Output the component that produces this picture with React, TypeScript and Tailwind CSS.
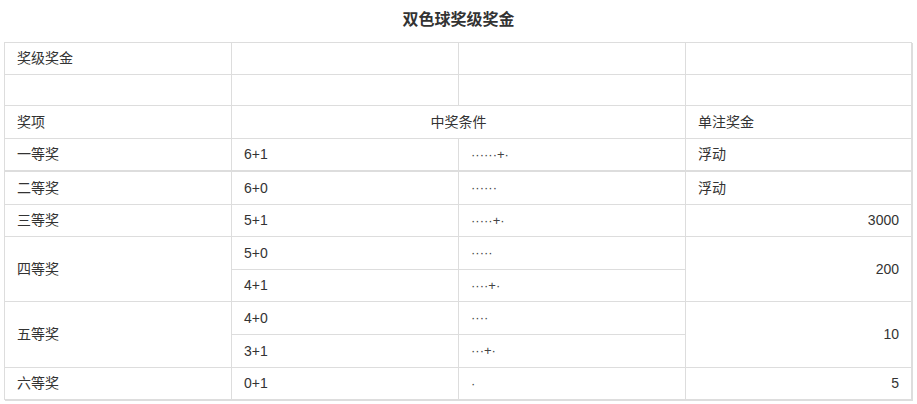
import React from "react";

type CellProps = {
  children?: React.ReactNode;
  className?: string;
};

function Cell({ children, className = "" }: CellProps) {
  return (
    <div
      className={`flex items-center border-r border-b border-[#dddddd] px-3 text-[14px] text-[#333333] ${className}`}
    >
      {children}
    </div>
  );
}

function Dots({ value }: { value: string }) {
  return <span className="text-[13px] text-[#444444]">{value}</span>;
}

export default function App() {
  return (
    <div
      className="w-[917px] h-[404px] bg-white"
      style={{ fontFamily: '"Liberation Sans", "Noto Sans CJK SC", sans-serif' }}
    >
      <h2 className="h-[42px] flex items-center justify-center pb-[2px] text-[16px] font-bold text-[#333333]">
        双色球奖级奖金
      </h2>
      <div className="ml-[4px] w-[908px] shadow-[1px_1px_0_0_#dddddd]">
        <div className="grid grid-cols-[227px_227px_227px_226px] grid-rows-[32px_31px_33px_33px_33px_32px_33px_32px_33px_33px_32px] border-t border-l border-[#dddddd]">
          <Cell>奖级奖金</Cell>
          <Cell />
          <Cell />
          <Cell />

          <Cell />
          <Cell />
          <Cell />
          <Cell />

          <Cell>奖项</Cell>
          <Cell className="col-span-2 justify-center">中奖条件</Cell>
          <Cell>单注奖金</Cell>

          <Cell className="border-b-2">一等奖</Cell>
          <Cell className="border-b-2">6+1</Cell>
          <Cell className="border-b-2">
            <Dots value="······+·" />
          </Cell>
          <Cell className="border-b-2">浮动</Cell>

          <Cell>二等奖</Cell>
          <Cell>6+0</Cell>
          <Cell>
            <Dots value="······" />
          </Cell>
          <Cell>浮动</Cell>

          <Cell>三等奖</Cell>
          <Cell>5+1</Cell>
          <Cell>
            <Dots value="·····+·" />
          </Cell>
          <Cell className="justify-end">3000</Cell>

          <Cell className="row-span-2">四等奖</Cell>
          <Cell>5+0</Cell>
          <Cell>
            <Dots value="·····" />
          </Cell>
          <Cell className="row-span-2 justify-end">200</Cell>
          <Cell>4+1</Cell>
          <Cell>
            <Dots value="····+·" />
          </Cell>

          <Cell className="row-span-2">五等奖</Cell>
          <Cell>4+0</Cell>
          <Cell>
            <Dots value="····" />
          </Cell>
          <Cell className="row-span-2 justify-end">10</Cell>
          <Cell>3+1</Cell>
          <Cell>
            <Dots value="···+·" />
          </Cell>

          <Cell>六等奖</Cell>
          <Cell>0+1</Cell>
          <Cell>
            <Dots value="·" />
          </Cell>
          <Cell className="justify-end">5</Cell>
        </div>
      </div>
    </div>
  );
}
